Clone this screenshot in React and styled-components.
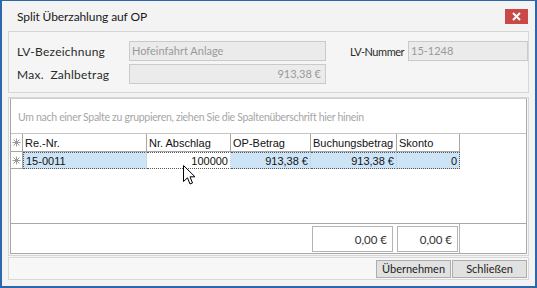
import styled, { createGlobalStyle } from 'styled-components'

const UI = 'Lato, "Open Sans", sans-serif'
const GRID = '"Liberation Sans", Arial, sans-serif'

const GlobalStyle = createGlobalStyle`
  body {
    margin: 0;
    background: #ffffff;
  }
  * {
    box-sizing: border-box;
  }
`
const Window = styled.div`
  position: relative;
  width: 537px;
  height: 288px;
  display: flex;
  flex-direction: column;
  background: #f3f3f3;
  border: 2px solid #2b67ad;
  border-top-width: 1px;
  font-family: ${UI};
  color: #222;
`
const TitleBar = styled.div`
  height: 30px;
  display: flex;
  align-items: center;
  justify-content: space-between;
  padding: 0 7px 0 15px;
  font-size: 12px;
  letter-spacing: -0.1px;
  color: #1a1a1a;
`
const Close = styled.div`
  width: 23px;
  height: 15px;
  margin-top: 1px;
  background: #c94848;
  display: flex;
  align-items: center;
  justify-content: center;
`
const Body = styled.div`
  flex: 1;
  display: flex;
  flex-direction: column;
  padding: 0 6px 6px 6px;
`
const TopPanel = styled.div`
  height: 62px;
  border: 1px solid #d6d6d6;
  background: #f5f5f5;
  padding: 9px 0 0 8px;
  display: grid;
  grid-template-columns: 112px 197px 20px 62px 1fr;
  grid-template-rows: 20px 20px;
  row-gap: 3px;
  align-items: center;
`
const Label = styled.div`
  font-size: ${(p) => (p.tight ? '11px' : '12px')};
  letter-spacing: ${(p) => (p.tight ? '-0.45px' : '0.25px')};
  padding-left: ${(p) => (p.tight ? '4px' : '0')};
  white-space: pre;
  color: #2a2a2a;
`
const Input = styled.div`
  height: 20px;
  border: 1px solid #cacaca;
  background: #ebebeb;
  color: #9a9a9a;
  font-size: 11px;
  line-height: 18px;
  padding: 0 4px 0 2px;
  text-align: ${(p) => (p.right ? 'right' : 'left')};
  white-space: nowrap;
  overflow: hidden;
`
const GridPanel = styled.div`
  margin-top: 4px;
  height: 159px;
  border: 1px solid #d6d6d6;
  background: #f7f7f7;
  padding: 0 1px 1px 1px;
`
const Grid = styled.div`
  height: 100%;
  border: 1px solid #a8a8a8;
  border-top-color: #d0d0d0;
  background: #fff;
  display: flex;
  flex-direction: column;
  font-family: ${GRID};
  font-size: 11px;
`
const GroupBox = styled.div`
  height: 35px;
  border-bottom: 1px solid #c4c4c4;
  color: #a6a6a6;
  padding: 12px 0 0 7px;
  font-family: ${UI};
  font-size: 10.5px;
  letter-spacing: -0.3px;
  white-space: nowrap;
`
const Row = styled.div`
  display: flex;
  height: ${(p) => p.h}px;
`
const Cell = styled.div`
  width: ${(p) => p.w}px;
  flex: none;
  display: flex;
  align-items: center;
  justify-content: ${(p) => (p.right ? 'flex-end' : 'flex-start')};
  padding: 0 2px;
  white-space: nowrap;
  border-right: 1px solid #a6a6a6;
  border-bottom: 1px solid #a6a6a6;
  color: #111;
`
const DataRow = styled.div`
  display: flex;
  height: 17px;
  width: 449px;
`
const Indicator = styled(Cell)`
  justify-content: center;
  padding: 0;
`
const DataCell = styled.div`
  width: ${(p) => p.w}px;
  flex: none;
  display: flex;
  align-items: center;
  justify-content: ${(p) => (p.right ? 'flex-end' : 'flex-start')};
  padding: 0 2px;
  background: ${(p) => (p.focus ? '#ffffff' : '#cde4f7')};
  border-top: 1px dotted #555;
  border-bottom: 1px dotted #555;
  border-right: 1px dotted ${(p) => (p.last ? '#555' : '#b9c9d8')};
  border-left: ${(p) => (p.first ? '1px dotted #555' : 'none')};
  color: #111;
`
const Spacer = styled.div`
  flex: 1;
`
const Footer = styled.div`
  height: 30px;
  border-top: 1px solid #a8a8a8;
  display: flex;
`
const FooterCells = styled.div`
  width: 449px;
  border-right: 1px solid #b4b4b4;
  display: flex;
  justify-content: flex-end;
  gap: 4px;
  padding: 2px 1px 1px 0;
`
const Total = styled.div`
  width: ${(p) => p.w}px;
  border: 1px solid #b4b4b4;
  display: flex;
  align-items: center;
  justify-content: flex-end;
  padding-right: 5px;
  font-family: ${UI};
  font-size: 11.5px;
  color: #333;
`
const ButtonBar = styled.div`
  margin-top: 1px;
  height: 23px;
  border: 1px solid #d8d8d8;
  background: #f7f7f7;
  display: flex;
  justify-content: flex-end;
  align-items: center;
  padding-right: 1px;
`
const Button = styled.div`
  width: ${(p) => p.w}px;
  height: 18px;
  background: #e1e1e1;
  border: 1px solid #adadad;
  margin-left: 1px;
  display: flex;
  align-items: center;
  justify-content: center;
  font-size: 11px;
  color: #222;
`
const Cursor = styled.svg`
  position: absolute;
  left: 181px;
  top: 164px;
`

const Star = () => (
  <svg width="9" height="9" viewBox="0 0 9 9">
    <g stroke="#9a9a9a" strokeWidth="1">
      <line x1="4.5" y1="0.5" x2="4.5" y2="8.5" />
      <line x1="0.5" y1="4.5" x2="8.5" y2="4.5" />
      <line x1="1.5" y1="1.5" x2="7.5" y2="7.5" />
      <line x1="7.5" y1="1.5" x2="1.5" y2="7.5" />
    </g>
  </svg>
)

const columns = [
  { title: 'Re.-Nr.', w: 124 },
  { title: 'Nr. Abschlag', w: 84 },
  { title: 'OP-Betrag', w: 80 },
  { title: 'Buchungsbetrag', w: 86 },
  { title: 'Skonto', w: 63 },
]
const values = [
  { v: '15-0011' },
  { v: '100000', right: true, focus: true },
  { v: '913,38 €', right: true },
  { v: '913,38 €', right: true },
  { v: '0', right: true },
]

const App = () => (
  <>
    <GlobalStyle />
    <Window>
      <TitleBar>
        <span>Split Überzahlung auf OP</span>
        <Close>
          <svg width="9" height="9" viewBox="0 0 9 9">
            <path d="M1 1 L8 8 M8 1 L1 8" stroke="#fff" strokeWidth="2" />
          </svg>
        </Close>
      </TitleBar>
      <Body>
        <TopPanel>
          <Label>LV-Bezeichnung</Label>
          <Input>Hofeinfahrt Anlage</Input>
          <span />
          <Label tight>LV-Nummer</Label>
          <Input>15-1248</Input>
          <Label>{'Max.  Zahlbetrag'}</Label>
          <Input right>913,38 €</Input>
        </TopPanel>
        <GridPanel>
          <Grid>
            <GroupBox>Um nach einer Spalte zu gruppieren, ziehen Sie die Spaltenüberschrift hier hinein</GroupBox>
            <Row h={18}>
              <Indicator w={12}>
                <Star />
              </Indicator>
              {columns.map((c) => (
                <Cell key={c.title} w={c.w}>
                  {c.title}
                </Cell>
              ))}
            </Row>
            <DataRow>
              <Indicator w={12}>
                <Star />
              </Indicator>
              {values.map((c, i) => (
                <DataCell
                  key={i}
                  w={columns[i].w}
                  right={c.right}
                  focus={c.focus}
                  first={i === 0}
                  last={i === values.length - 1}
                >
                  {c.v}
                </DataCell>
              ))}
            </DataRow>
            <Spacer />
            <Footer>
              <FooterCells>
                <Total w={81}>0,00 €</Total>
                <Total w={61}>0,00 €</Total>
              </FooterCells>
            </Footer>
          </Grid>
        </GridPanel>
        <ButtonBar>
          <Button w={75}>Übernehmen</Button>
          <Button w={75}>Schließen</Button>
        </ButtonBar>
      </Body>
      <Cursor width="13" height="21" viewBox="0 0 13 21">
        <path d="M0.5 0.5 L0.5 16.5 L4.5 12.8 L7 19 L9.5 18 L7 11.8 L12 11.8 Z" fill="#fff" stroke="#000" strokeWidth="1" strokeLinejoin="miter" />
      </Cursor>
    </Window>
  </>
)

export default App
